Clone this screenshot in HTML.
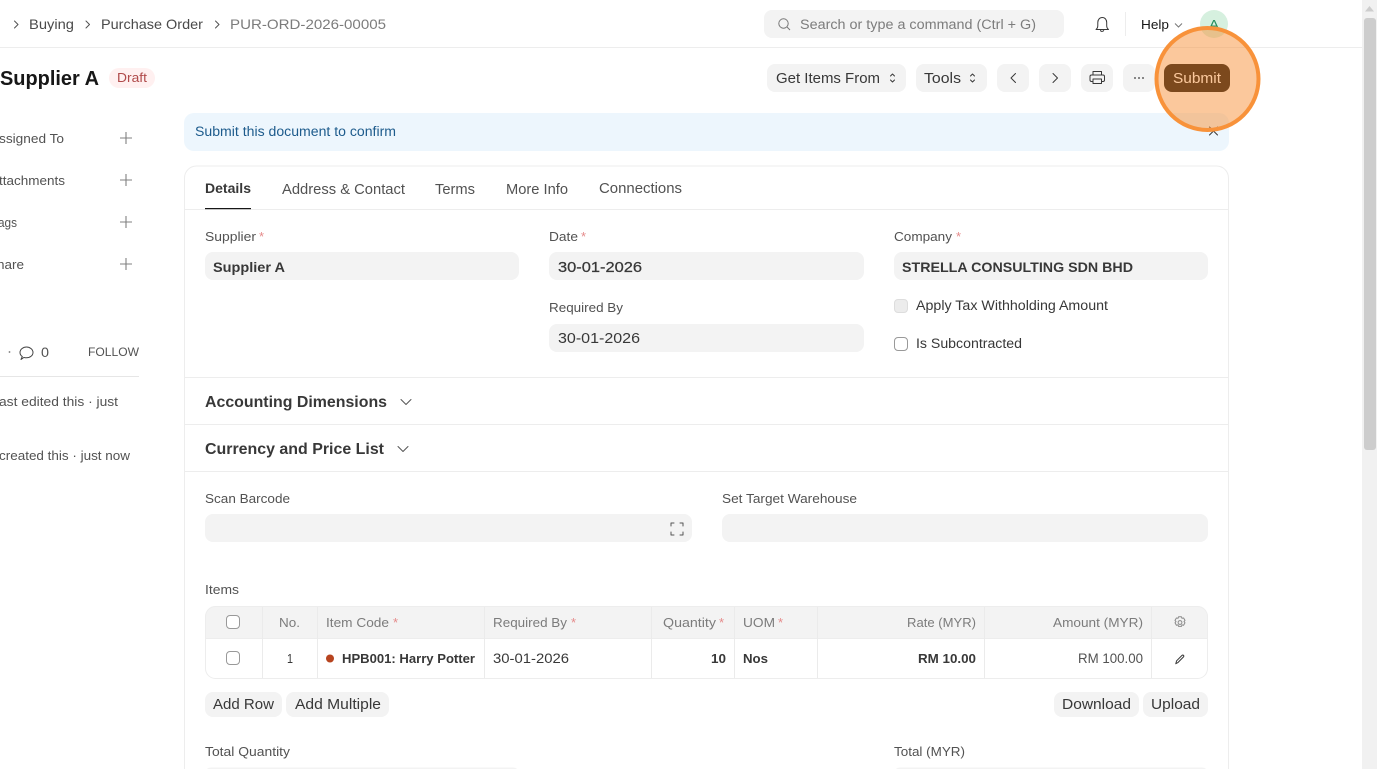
<!DOCTYPE html>
<html lang="en"><head><meta charset="utf-8"><title>PUR-ORD-2026-00005</title>
<style>
html,body{margin:0;padding:0;background:#fff;width:1377px;height:769px;overflow:hidden}
svg{display:block}
text{font-family:"Liberation Sans",Arial,sans-serif;font-size:13.5px;fill:#525252}
.d{fill:#383838}
.b{font-weight:700;fill:#383838}
.l{font-size:13px;fill:#525252}
.s{fill:#e58a8a;font-size:13px}
.h{fill:#7c7c7c;font-size:13px}
.i{fill:none;stroke:#383838;stroke-width:1;stroke-linecap:round;stroke-linejoin:round}
.f{fill:#f3f3f3}
.c{fill:#fff;stroke:#999;stroke-width:1}
.g{stroke:#ededed;stroke-width:1}
</style></head><body>
<svg width="1377" height="769" viewBox="0 0 1377 769" xmlns="http://www.w3.org/2000/svg">
<rect width="1377" height="769" fill="#fff"/>
<!-- navbar -->
<path class="i" d="M14.500 21l3.500 3.500-3.500 3.500M86 21l3.500 3.500-3.500 3.500M215.500 21l3.500 3.500-3.500 3.500" style="stroke:#525252"/>
<text x="29" y="29" textLength="45" lengthAdjust="spacingAndGlyphs" style="fill:#4a4a4a;font-size:14px">Buying</text>
<text x="101" y="29" textLength="102" lengthAdjust="spacingAndGlyphs" style="fill:#4a4a4a;font-size:14px">Purchase Order</text>
<text x="230" y="29" textLength="156" lengthAdjust="spacingAndGlyphs" style="fill:#7c7c7c;font-size:14px">PUR-ORD-2026-00005</text>
<line x1="0" y1="47.500" x2="1362" y2="47.500" class="g"/>
<rect x="764" y="10" width="300" height="28" rx="8" class="f"/>
<circle cx="783.500" cy="23.500" r="4.700" fill="none" stroke="#777" stroke-width="1"/><path d="M787 27l3 3" stroke="#777" fill="none"/>
<text x="800" y="29" textLength="236" lengthAdjust="spacingAndGlyphs" style="fill:#7c7c7c;font-size:13.500px">Search or type a command (Ctrl + G)</text>
<path class="i" d="M1096 29.500h12.500c-1.300-1-1.800-2.200-1.800-4v-3c0-3-1.900-5-4.400-5s-4.500 2-4.500 5v3c0 1.800-.5 3-1.800 4zM1100.500 30.500c.3 1.200 2.800 1.200 3.200 0"/>
<line x1="1125.500" y1="12" x2="1125.500" y2="36" class="g"/>
<text x="1141" y="29" textLength="28" lengthAdjust="spacingAndGlyphs" style="fill:#171717;font-size:13px">Help</text>
<path d="M1175 23.500l3.500 3.500 3.500-3.500" fill="none" stroke="#777"/>
<circle cx="1214" cy="24" r="14" fill="#d6f0df"/>
<text x="1209" y="29" textLength="10" lengthAdjust="spacingAndGlyphs" style="fill:#278f5e;font-size:13px">A</text>
<!-- page head -->
<text x="0" y="85" textLength="99" lengthAdjust="spacingAndGlyphs" style="font-size:20px;font-weight:700;fill:#171717">Supplier A</text>
<rect x="109" y="68" width="46" height="20" rx="10" fill="#fff0f0"/>
<text x="117" y="82" textLength="30" lengthAdjust="spacingAndGlyphs" style="font-size:13px;fill:#b04a4a">Draft</text>
<rect x="767" y="64" width="139" height="28" rx="8" class="f"/>
<text x="776" y="83" textLength="104" lengthAdjust="spacingAndGlyphs" class="d" style="font-size:14.500px">Get Items From</text>
<path class="i" d="M890.500 76l2-2 2 2M890.500 80l2 2 2-2"/>
<rect x="916" y="64" width="71" height="28" rx="8" class="f"/>
<text x="924" y="83" textLength="37" lengthAdjust="spacingAndGlyphs" class="d" style="font-size:14.500px">Tools</text>
<path class="i" d="M970.500 76l2-2 2 2M970.500 80l2 2 2-2"/>
<rect x="997" y="64" width="32" height="28" rx="8" class="f"/>
<path class="i" d="M1015.500 73.500l-4.500 4.500 4.500 4.500"/>
<rect x="1039" y="64" width="32" height="28" rx="8" class="f"/>
<path class="i" d="M1053 73.500l4.500 4.500-4.500 4.500"/>
<rect x="1081" y="64" width="32" height="28" rx="8" class="f"/>
<path class="i" d="M1093 75v-3.500h8.500v3.500M1093 81.500h-1.500a1.500 1.500 0 0 1-1.500-1.500v-3.500a1.500 1.500 0 0 1 1.500-1.500h11.500a1.500 1.500 0 0 1 1.500 1.500v3.500a1.500 1.500 0 0 1-1.500 1.500h-1.500M1093 79h8.500v4.500h-8.500z" stroke-width="1.200"/>
<rect x="1123" y="64" width="32" height="28" rx="8" class="f"/>
<circle cx="1135" cy="78" r=".9" fill="#383838"/><circle cx="1139" cy="78" r=".9" fill="#383838"/><circle cx="1143" cy="78" r=".9" fill="#383838"/>
<rect x="1164" y="64" width="66" height="28" rx="8" fill="#000"/>
<text x="1173" y="83" textLength="48" lengthAdjust="spacingAndGlyphs" style="font-size:14.500px;fill:#fff">Submit</text>
<!-- sidebar -->
<text x="-1" y="143" textLength="65" lengthAdjust="spacingAndGlyphs" style="font-size:13px">ssigned To</text>
<text x="-1" y="185" textLength="66" lengthAdjust="spacingAndGlyphs" style="font-size:13px">ttachments</text>
<text x="-2" y="227" textLength="19" lengthAdjust="spacingAndGlyphs" style="font-size:13px">ags</text>
<text x="-3" y="269" textLength="27" lengthAdjust="spacingAndGlyphs" style="font-size:13px">hare</text>
<path d="M120 138h12M126 132v12M120 180h12M126 174v12M120 222h12M126 216v12M120 264h12M126 258v12" stroke="#808080" stroke-width="1.100" fill="none"/>
<circle cx="9.500" cy="352" r=".9" fill="#777"/>
<path class="i" d="M21 359.500l1.300-3c-1.500-1-2.300-2.500-2.300-4 0-3 3-5.500 6.500-5.500s6.500 2.500 6.500 5.500-3 5.300-6.500 5.300c-.9 0-1.800-.1-2.500-.4z" style="stroke:#444"/>
<text x="41" y="357" textLength="8" lengthAdjust="spacingAndGlyphs" class="d" style="fill:#525252">0</text>
<text x="88" y="356" textLength="51" lengthAdjust="spacingAndGlyphs" style="font-size:12px;fill:#525252">FOLLOW</text>
<line x1="0" y1="376.500" x2="139" y2="376.500" stroke="#e6e6e6"/>
<text x="-1" y="406" textLength="119" lengthAdjust="spacingAndGlyphs" class="l">ast edited this · just</text>
<text x="-1" y="460" textLength="131" lengthAdjust="spacingAndGlyphs" class="l">created this · just now</text>
<!-- alert -->
<rect x="184" y="113" width="1045" height="38" rx="10" fill="#edf6fd"/>
<text x="195" y="136" textLength="201" lengthAdjust="spacingAndGlyphs" style="font-size:13.500px;fill:#1d5b8c">Submit this document to confirm</text>
<path class="i" d="M1209.500 127l8 8M1217.500 127l-8 8"/>
<!-- card -->
<path d="M184.500 769V178a12 12 0 0 1 12-12h1020a12 12 0 0 1 12 12V769" fill="#fff" stroke="#ededed"/>
<text x="205" y="193" textLength="46" lengthAdjust="spacingAndGlyphs" class="b" style="font-size:14px">Details</text>
<text x="282" y="194" textLength="123" lengthAdjust="spacingAndGlyphs" style="font-size:14.500px">Address &amp; Contact</text>
<text x="435" y="194" textLength="40" lengthAdjust="spacingAndGlyphs" style="font-size:14.500px">Terms</text>
<text x="506" y="194" textLength="62" lengthAdjust="spacingAndGlyphs" style="font-size:14.500px">More Info</text>
<text x="599" y="193" textLength="83" lengthAdjust="spacingAndGlyphs" style="font-size:14.500px">Connections</text>
<line x1="185" y1="209.500" x2="1228" y2="209.500" class="g"/>
<rect x="205" y="208" width="46" height="1.200" fill="#171717"/>
<!-- fields -->
<text x="205" y="241" textLength="51" lengthAdjust="spacingAndGlyphs" class="l">Supplier</text><text x="259" y="241" class="s">*</text>
<rect x="205" y="252" width="314" height="28" rx="8" class="f"/>
<text x="213" y="272" textLength="72" lengthAdjust="spacingAndGlyphs" class="b" style="font-size:14px">Supplier A</text>
<text x="549" y="241" textLength="29" lengthAdjust="spacingAndGlyphs" class="l">Date</text><text x="581" y="241" class="s">*</text>
<rect x="549" y="252" width="315" height="28" rx="8" class="f"/>
<text x="558" y="272" textLength="84" lengthAdjust="spacingAndGlyphs" class="b" style="font-size:14.500px;font-weight:400;stroke:#383838;stroke-width:.25">30-01-2026</text>
<text x="894" y="241" textLength="58" lengthAdjust="spacingAndGlyphs" class="l">Company</text><text x="956" y="241" class="s">*</text>
<rect x="894" y="252" width="314" height="28" rx="8" class="f"/>
<text x="902" y="272" textLength="231" lengthAdjust="spacingAndGlyphs" class="b" style="font-size:14px">STRELLA CONSULTING SDN BHD</text>
<text x="549" y="312" textLength="74" lengthAdjust="spacingAndGlyphs" class="l">Required By</text>
<rect x="549" y="324" width="315" height="28" rx="8" class="f"/>
<text x="558" y="343" textLength="82" lengthAdjust="spacingAndGlyphs" style="font-size:14.500px" class="d">30-01-2026</text>
<rect x="894.500" y="299.500" width="13" height="13" rx="3.500" fill="#ececec" stroke="#ddd"/>
<text x="916" y="310" textLength="192" lengthAdjust="spacingAndGlyphs" class="d" style="font-size:13.500px">Apply Tax Withholding Amount</text>
<rect x="894.500" y="337.500" width="13" height="13" rx="3.500" class="c"/>
<text x="916" y="348" textLength="106" lengthAdjust="spacingAndGlyphs" class="d" style="font-size:13.500px">Is Subcontracted</text>
<line x1="185" y1="377.500" x2="1228" y2="377.500" class="g"/>
<text x="205" y="407" textLength="182" lengthAdjust="spacingAndGlyphs" class="b" style="font-size:16px">Accounting Dimensions</text>
<path class="i" d="M401 399.500l5 5 5-5" style="stroke:#555"/>
<line x1="185" y1="424.500" x2="1228" y2="424.500" class="g"/>
<text x="205" y="454" textLength="179" lengthAdjust="spacingAndGlyphs" class="b" style="font-size:16px">Currency and Price List</text>
<path class="i" d="M398 446.500l5 5 5-5" style="stroke:#555"/>
<line x1="185" y1="471.500" x2="1228" y2="471.500" class="g"/>
<text x="205" y="503" textLength="85" lengthAdjust="spacingAndGlyphs" class="l">Scan Barcode</text>
<rect x="205" y="514" width="487" height="28" rx="8" class="f"/>
<path class="i" d="M671 526v-3h3M680 523h3v3M683 532v3h-3M674 535h-3v-3" style="stroke:#555"/>
<text x="722" y="503" textLength="135" lengthAdjust="spacingAndGlyphs" class="l">Set Target Warehouse</text>
<rect x="722" y="514" width="486" height="28" rx="8" class="f"/>
<text x="205" y="594" textLength="34" lengthAdjust="spacingAndGlyphs" class="l">Items</text>
<!-- table -->
<path d="M205.500 638V616a10 10 0 0 1 10-10h982a10 10 0 0 1 10 10v22z" fill="#f3f3f3"/>
<rect x="205.500" y="606.500" width="1002" height="72" rx="10" fill="none" stroke="#ededed"/>
<line x1="206" y1="638.500" x2="1207" y2="638.500" class="g"/>
<path d="M262.500 607v71M317.500 607v71M484.500 607v71M651.500 607v71M734.500 607v71M817.500 607v71M984.500 607v71M1151.500 607v71" stroke="#ebebeb" fill="none"/>
<rect x="226.500" y="615.500" width="13" height="13" rx="3.500" class="c"/>
<rect x="226.500" y="651.500" width="13" height="13" rx="3.500" class="c"/>
<text x="279" y="627" textLength="21" lengthAdjust="spacingAndGlyphs" class="h">No.</text>
<text x="326" y="627" textLength="63" lengthAdjust="spacingAndGlyphs" class="h">Item Code</text><text x="393" y="627" class="s">*</text>
<text x="493" y="627" textLength="74" lengthAdjust="spacingAndGlyphs" class="h">Required By</text><text x="571" y="627" class="s">*</text>
<text x="663" y="627" textLength="53" lengthAdjust="spacingAndGlyphs" class="h">Quantity</text><text x="719" y="627" class="s">*</text>
<text x="743" y="627" textLength="32" lengthAdjust="spacingAndGlyphs" class="h">UOM</text><text x="778" y="627" class="s">*</text>
<text x="907" y="627" textLength="69" lengthAdjust="spacingAndGlyphs" class="h">Rate (MYR)</text>
<text x="1053" y="627" textLength="90" lengthAdjust="spacingAndGlyphs" class="h">Amount (MYR)</text>
<g class="i" style="stroke:#8a8a8a"><circle cx="1180" cy="622.500" r="1.900"/><path d="M1178.600 616.800h2.800l.6 1.500 1.600-.3 1.400 2.400-1 1.200 1 1.200-1.400 2.400-1.600-.3-.6 1.500h-2.800l-.6-1.500-1.600.3-1.400-2.400 1-1.200-1-1.200 1.400-2.400 1.600.3z"/></g>
<text x="287" y="663" textLength="6" lengthAdjust="spacingAndGlyphs" class="d" style="font-size:13px">1</text>
<circle cx="330" cy="658.500" r="4" fill="#b7441f"/>
<text x="342" y="663" textLength="133" lengthAdjust="spacingAndGlyphs" class="b" style="font-size:13px">HPB001: Harry Potter</text>
<text x="493" y="663" textLength="76" lengthAdjust="spacingAndGlyphs" class="d" style="font-size:13.500px">30-01-2026</text>
<text x="711" y="663" textLength="15" lengthAdjust="spacingAndGlyphs" class="b" style="font-size:13px">10</text>
<text x="743" y="663" textLength="25" lengthAdjust="spacingAndGlyphs" class="b" style="font-size:13px">Nos</text>
<text x="918" y="663" textLength="58" lengthAdjust="spacingAndGlyphs" class="b" style="font-size:13px">RM 10.00</text>
<text x="1078" y="663" textLength="65" lengthAdjust="spacingAndGlyphs" style="font-size:13.500px">RM 100.00</text>
<path class="i" d="M1175.800 663.700l.8-2.900 5.400-5.400c.5-.4 1.100-.4 1.500 0s.4 1 0 1.500l-5.400 5.500z"/>
<!-- grid buttons -->
<rect x="205" y="692" width="77" height="25" rx="8" class="f"/>
<text x="213" y="709" textLength="61" lengthAdjust="spacingAndGlyphs" class="d" style="font-size:14.500px">Add Row</text>
<rect x="286" y="692" width="103" height="25" rx="8" class="f"/>
<text x="295" y="709" textLength="86" lengthAdjust="spacingAndGlyphs" class="d" style="font-size:14.500px">Add Multiple</text>
<rect x="1054" y="692" width="85" height="25" rx="8" class="f"/>
<text x="1062" y="709" textLength="69" lengthAdjust="spacingAndGlyphs" class="d" style="font-size:14.500px">Download</text>
<rect x="1143" y="692" width="65" height="25" rx="8" class="f"/>
<text x="1151" y="709" textLength="49" lengthAdjust="spacingAndGlyphs" class="d" style="font-size:14.500px">Upload</text>
<text x="205" y="756" textLength="85" lengthAdjust="spacingAndGlyphs" class="l">Total Quantity</text>
<text x="894" y="756" textLength="71" lengthAdjust="spacingAndGlyphs" class="l">Total (MYR)</text>
<rect x="205" y="767.500" width="314" height="10" rx="6" class="f"/>
<rect x="894" y="767.500" width="314" height="10" rx="6" class="f"/>
<!-- scrollbar -->
<rect x="1362" y="0" width="15" height="769" fill="#f1f1f1"/>
<path d="M1369.500 6l-4.500 5.500h9z" fill="#cdcdcd"/>
<rect x="1364" y="18" width="12" height="432" rx="3" fill="#cdcdcd"/>
<!-- highlight -->
<circle cx="1207.500" cy="79" r="51" fill="#f8923a" fill-opacity=".5" stroke="#f8923a" stroke-width="4"/>
</svg>
</body></html>
